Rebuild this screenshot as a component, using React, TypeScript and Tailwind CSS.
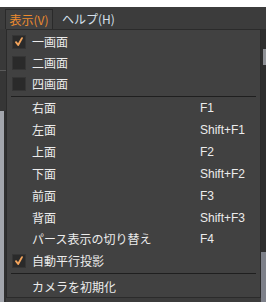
import React from 'react'

type Item = { label: string; key?: string; checked?: boolean }

const views: Item[] = [
  { label: '右面', key: 'F1' },
  { label: '左面', key: 'Shift+F1' },
  { label: '上面', key: 'F2' },
  { label: '下面', key: 'Shift+F2' },
  { label: '前面', key: 'F3' },
  { label: '背面', key: 'Shift+F3' },
  { label: 'パース表示の切り替え', key: 'F4' },
  { label: '自動平行投影', checked: true },
]

const jp = { fontFamily: '"Noto Sans CJK JP", "Liberation Sans", sans-serif' }
const latin = { fontFamily: '"Liberation Sans", "DejaVu Sans", sans-serif' }

function Check() {
  return (
    <svg width="14" height="14" viewBox="0 0 14 14">
      <path d="M3.5 7.2 L6 10.5 L10.5 2.5" fill="none" stroke="#f3a45c" strokeWidth="2.2" strokeLinecap="round" strokeLinejoin="round" />
    </svg>
  )
}

function Box({ checked }: { checked?: boolean }) {
  return (
    <div className="w-[14px] h-[14px] bg-[#2a2a2a] border border-[#353535] flex items-center justify-center">
      {checked && <Check />}
    </div>
  )
}

function Separator({ className }: { className: string }) {
  return <div className={`mx-[4px] h-px bg-[#1f1f1f] ${className}`} />
}

export default function App() {
  return (
    <div className="relative w-[266px] h-[302px] overflow-hidden bg-[#3c3c3c] text-[12px]" style={jp}>
      {/* window top */}
      <div className="h-[7px] bg-white" />

      {/* menu bar */}
      <div className="h-[22px] flex items-end bg-[#3c3c3c]">
        <div className="relative z-10 ml-[5px] h-[20px] w-[48px] border border-b-0 border-[#2a2a2a] bg-[#414141] flex items-center justify-center text-[#ec8a2f] text-[12px] leading-none">
          表示(V)
        </div>
        <div className="ml-[9px] h-[20px] flex items-center text-[#d6e0ec] text-[12px] leading-none">ヘルプ(H)</div>
      </div>

      {/* content behind the menu */}
      <div className="flex h-[273px]">
        <div className="w-[6px] flex flex-col">
          <div className="h-[42px] bg-[#393939] border-b border-[#5a5a5a]" />
          <div className="h-[40px] bg-[#363636]" />
          <div className="flex-1 bg-[#a3a6ad] border-r-2 border-[#303030]" />
        </div>
        <div className="flex-1" />
        <div className="w-[5px] flex flex-col bg-[#2e2e2e]">
          <div className="h-[20px]" />
          <div className="h-[16px] ml-[2px] bg-[#8d8f94]" />
          <div className="flex-1" />
          <div className="h-[50px] bg-[#7d8089]" />
        </div>
      </div>
      <div className="h-[5px] bg-[#8b8e97]" />

      {/* dropdown */}
      <div className="absolute left-[6px] top-[29px] w-[255px] h-[269px] bg-[#414141] border border-[#2b2b2b] text-[#ececec] flex flex-col pt-[2px]">
        {['一画面', '二画面', '四画面'].map((l, i) => (
          <div key={l} className="h-[21px] flex items-center">
            <div className="w-[25px] pl-[5px]">
              <Box checked={i === 0} />
            </div>
            <span className="leading-none">{l}</span>
          </div>
        ))}
        <Separator className="mt-[1px] mb-[1px]" />
        {views.map((v) => (
          <div key={v.label} className="h-[22px] flex items-center">
            <div className="w-[25px] pl-[5px]">{v.checked !== undefined && <Box checked={v.checked} />}</div>
            <span className="w-[168px] leading-none">{v.label}</span>
            {v.key && (
              <span className="leading-none" style={latin}>
                {v.key}
              </span>
            )}
          </div>
        ))}
        <Separator className="mt-[1px] mb-[2px]" />
        <div className="h-[21px] flex items-center pl-[25px]">
          <span className="leading-none">カメラを初期化</span>
        </div>
      </div>
    </div>
  )
}
